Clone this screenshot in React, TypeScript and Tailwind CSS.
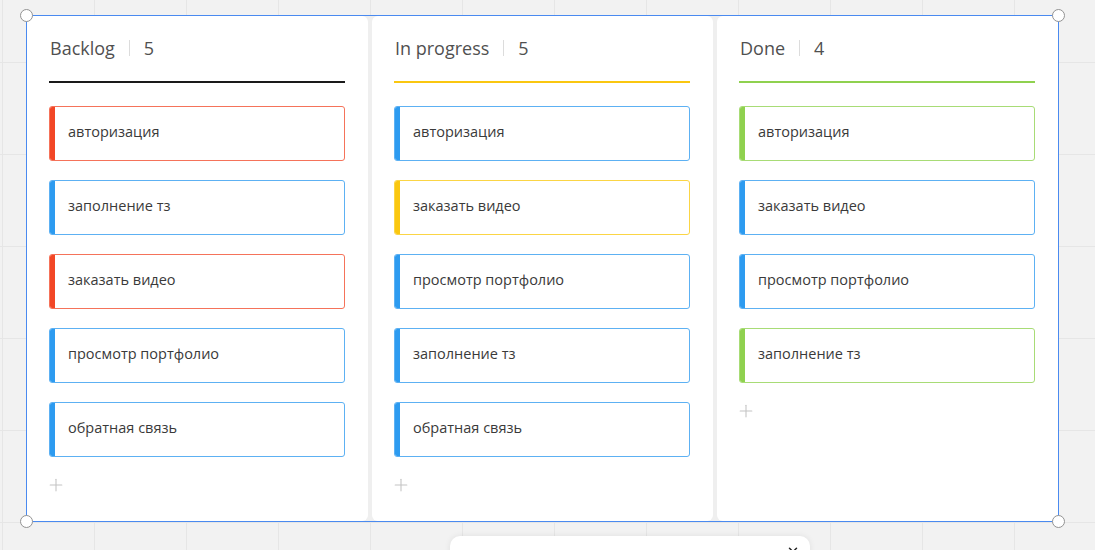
import { ChevronDown, Plus } from "lucide-react";

type Tone = "red" | "blue" | "yellow" | "green";

const tones: Record<Tone, { bar: string; border: string }> = {
  red: { bar: "bg-[#f24726]", border: "border-[#f5735a]" },
  blue: { bar: "bg-[#2d9bf0]", border: "border-[#5db1f3]" },
  yellow: { bar: "bg-[#fac710]", border: "border-[#fbd545]" },
  green: { bar: "bg-[#8fd14f]", border: "border-[#a8dc76]" },
};

type Column = {
  title: string;
  line: string;
  cards: { text: string; tone: Tone }[];
};

const columns: Column[] = [
  {
    title: "Backlog",
    line: "bg-[#1a1a1a]",
    cards: [
      { text: "авторизация", tone: "red" },
      { text: "заполнение тз", tone: "blue" },
      { text: "заказать видео", tone: "red" },
      { text: "просмотр портфолио", tone: "blue" },
      { text: "обратная связь", tone: "blue" },
    ],
  },
  {
    title: "In progress",
    line: "bg-[#fac710]",
    cards: [
      { text: "авторизация", tone: "blue" },
      { text: "заказать видео", tone: "yellow" },
      { text: "просмотр портфолио", tone: "blue" },
      { text: "заполнение тз", tone: "blue" },
      { text: "обратная связь", tone: "blue" },
    ],
  },
  {
    title: "Done",
    line: "bg-[#8fd14f]",
    cards: [
      { text: "авторизация", tone: "green" },
      { text: "заказать видео", tone: "blue" },
      { text: "просмотр портфолио", tone: "blue" },
      { text: "заполнение тз", tone: "green" },
    ],
  },
];

function Card({ text, tone }: { text: string; tone: Tone }) {
  const t = tones[tone];
  return (
    <div className={`flex h-[55px] overflow-hidden rounded-[3px] border ${t.border}`}>
      <div className={`w-[5px] shrink-0 ${t.bar}`} />
      <div className="flex items-center pb-[3px] pl-[13px] text-[14.5px] text-[#3a3a3a]">{text}</div>
    </div>
  );
}

function BoardColumn({ col }: { col: Column }) {
  return (
    <div className="flex w-[341px] flex-col rounded-[6px] bg-white pl-[22px] pr-[23px] pt-[20px]">
      <div className="flex h-[24px] items-center pl-px text-[18px] text-[#505050]">
        <span>{col.title}</span>
        <span className="ml-[14px] mr-[14px] h-[16px] w-px bg-[#dcdcdc]" />
        <span>{col.cards.length}</span>
      </div>
      <div className={`mt-[21px] h-[2px] ${col.line}`} />
      <div className="mt-[23px] flex flex-col gap-[19px]">
        {col.cards.map((c, i) => (
          <Card key={i} text={c.text} tone={c.tone} />
        ))}
      </div>
      <div className="mt-[18px] -ml-[3px] text-[#c4c4c4]">
        <Plus size={20} strokeWidth={1.3} />
      </div>
    </div>
  );
}

function Handle({ className }: { className: string }) {
  return (
    <div
      className={`absolute h-[13px] w-[13px] rounded-full border-[1.5px] border-[#939393] bg-white ${className}`}
    />
  );
}

export default function App() {
  return (
    <div
      className="relative h-[550px] w-[1095px] overflow-hidden bg-[#f2f2f2] bg-[linear-gradient(to_right,#e6e6e6_1px,transparent_1px),linear-gradient(to_bottom,#e6e6e6_1px,transparent_1px)] bg-[size:92px_92px] bg-[position:2px_62px] pl-[26px] pt-[15px]"
      style={{ fontFamily: '"Open Sans", "Noto Sans", sans-serif' }}
    >
      <div className="relative h-[507px] w-[1033px] border border-[#4a8af0]">
        <div className="flex h-full gap-[4px] bg-[#efefef]">
          {columns.map((col) => (
            <BoardColumn key={col.title} col={col} />
          ))}
        </div>
        <Handle className="-left-[7px] -top-[7px]" />
        <Handle className="-right-[7px] -top-[7px]" />
        <Handle className="-bottom-[7px] -left-[7px]" />
        <Handle className="-bottom-[7px] -right-[7px]" />
      </div>

      <div className="absolute left-[450px] top-[536px] h-[40px] w-[360px] rounded-t-[10px] bg-white shadow-[0_0_6px_rgba(0,0,0,0.08)]">
        <div className="absolute right-[10px] top-[7px] text-[#222]">
          <ChevronDown size={14} strokeWidth={2.5} />
        </div>
      </div>
    </div>
  );
}
